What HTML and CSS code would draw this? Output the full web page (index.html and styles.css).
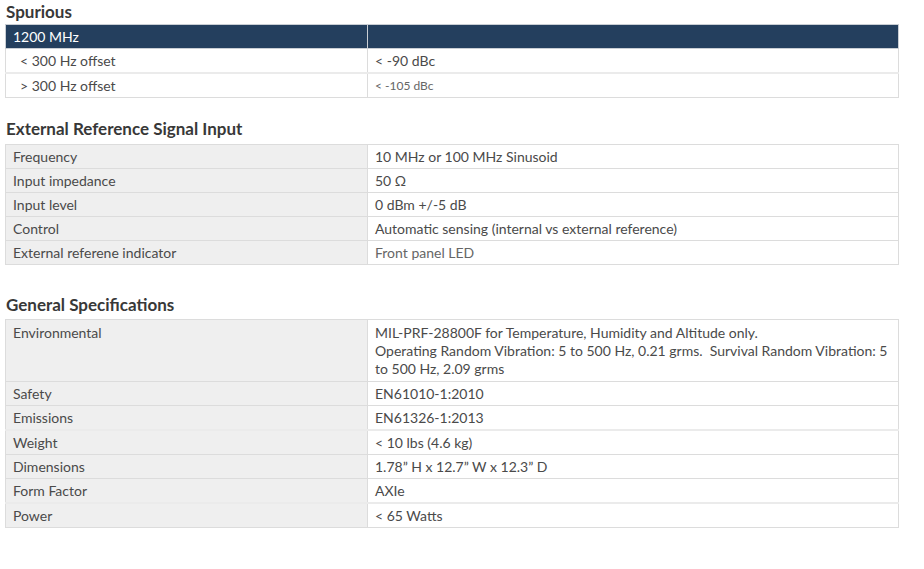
FILE: index.html
```html
<!DOCTYPE html>
<html>
<head>
<meta charset="utf-8">
<link rel="stylesheet" href="styles.css">
</head>
<body>
<section class="spec spec-first">
  <h2>Spurious</h2>
  <table class="plain">
    <tr class="head"><td>1200 MHz</td><td></td></tr>
    <tr class="sep"><td class="indent">&lt; 300 Hz offset</td><td>&lt; -90 dBc</td></tr>
    <tr><td class="indent">&gt; 300 Hz offset</td><td class="small">&lt; -105 dBc</td></tr>
  </table>
</section>
<section class="spec spec-second">
  <h2>External Reference Signal Input</h2>
  <table>
    <tr><td>Frequency</td><td>10 MHz or 100 MHz Sinusoid</td></tr>
    <tr><td>Input impedance</td><td>50 Ω</td></tr>
    <tr><td>Input level</td><td>0 dBm +/-5 dB</td></tr>
    <tr><td>Control</td><td>Automatic sensing (internal vs external reference)</td></tr>
    <tr><td>External referene indicator</td><td class="light">Front panel LED</td></tr>
  </table>
</section>
<section class="spec spec-third">
  <h2>General Specifications</h2>
  <table>
    <tr class="tall"><td>Environmental</td><td>MIL-PRF-28800F for Temperature, Humidity and Altitude only.<br>Operating Random Vibration: 5 to 500 Hz, 0.21 grms.&nbsp; Survival Random Vibration: 5 to 500 Hz, 2.09 grms</td></tr>
    <tr><td>Safety</td><td>EN61010-1:2010</td></tr>
    <tr class="sep"><td>Emissions</td><td>EN61326-1:2013</td></tr>
    <tr><td>Weight</td><td>&lt; 10 lbs (4.6 kg)</td></tr>
    <tr><td>Dimensions</td><td>1.78” H x 12.7” W x 12.3” D</td></tr>
    <tr class="sep"><td>Form Factor</td><td>AXIe</td></tr>
    <tr><td>Power</td><td>&lt; 65 Watts</td></tr>
  </table>
</section>
</body>
</html>
```
FILE: styles.css
```css
html, body {
  margin: 0;
  padding: 0;
  background: #ffffff;
}
body {
  padding: 0 25px 0 5px;
  font-family: Lato, "Open Sans", "Liberation Sans", sans-serif;
  font-size: 14px;
  color: #4a4a4a;
}
.spec h2 {
  margin: 0;
  padding-left: 1px;
  font-size: 17px;
  font-weight: bold;
  color: #383838;
  line-height: 20px;
}
.spec-first h2 {
  padding-top: 2px;
  height: 22px;
}
.spec-second {
  margin-top: 21px;
}
.spec-second h2 {
  height: 25px;
}
.spec-third {
  margin-top: 30px;
}
.spec-third h2 {
  height: 24px;
}
table {
  width: 894px;
  border-collapse: collapse;
  table-layout: fixed;
}
td {
  border: 1px solid #dcdcdc;
  padding: 3px 7px 2px 7px;
  line-height: 18px;
  vertical-align: top;
}
td:first-child {
  width: 347px;
  background: #efefef;
}
.plain td:first-child {
  background: #ffffff;
}
.head td,
.plain .head td:first-child {
  background: #243f5e;
  color: #ffffff;
  border-color: #c9ced4;
}
td.indent {
  padding-left: 14px;
}
td.small {
  font-size: 12px;
  color: #666666;
}
td.light {
  color: #666666;
}
.tall td {
  padding-top: 4px;
  padding-bottom: 3px;
}
.sep td {
  border-bottom: 2px solid #ebebeb;
}
```
